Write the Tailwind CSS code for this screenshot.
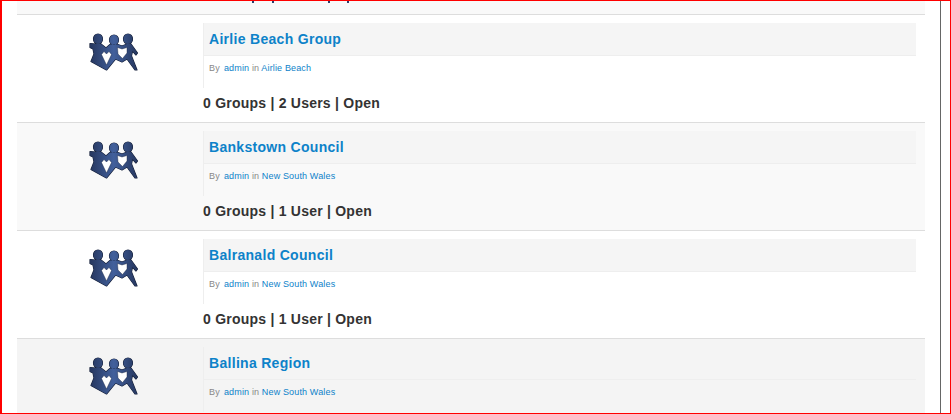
<!DOCTYPE html>
<html lang="en">
<head>
  <meta charset="UTF-8" />
  <title>Groups</title>
  <script src="https://cdn.jsdelivr.net/npm/@tailwindcss/browser@4"></script>
</head>
<body class="bg-white font-['Liberation_Sans',Arial,sans-serif]">
  <!-- sprite for the paper-doll group icon -->
  <svg class="absolute w-0 h-0">
    <defs>
      <linearGradient id="doll" x1="0" y1="0" x2="1" y2="0">
        <stop offset="0" stop-color="#26375f" />
        <stop offset="0.5" stop-color="#42609c" />
        <stop offset="1" stop-color="#26375f" />
      </linearGradient>
      <path id="doll-shape" d="M1 10.500 L6 11 L12 11 L17 15 L21 11.500 L29 11.500 L33 13 L38 11 L42 11 L48.500 20 L47 22 L43.500 18 L42.500 23 L48 37 L46 37 L38 26 L33 29 L26.500 26 L17.500 37 L2 28.500 L5 21 L4 16 L1 14.500 Z M4.500 6 a4.500 5 0 1 0 9 0 a4.500 5 0 1 0 -9 0 Z M20.500 7 a4.500 5 0 1 0 9 0 a4.500 5 0 1 0 -9 0 Z M34.500 6 a4.500 5 0 1 0 9 0 a4.500 5 0 1 0 -9 0 Z" />
      <symbol id="group-icon" viewBox="0 0 50 40">
        <use href="#doll-shape" fill="#16213b" stroke="#16213b" stroke-width="1.200" stroke-linejoin="round" />
        <use href="#doll-shape" fill="url(#doll)" />
        <path fill="#fff" stroke="#16213b" stroke-width="0.400" d="M28.500 14.500 L33 16 L38 14.500 L38 20 L33.500 25.500 L29 21 Z" />
        <path fill="#fff" stroke="#16213b" stroke-width="0.400" d="M12.500 21.500 L15 18.500 L17.500 21 L20 18.500 L22.500 21.500 L17.500 32 Z" />
      </symbol>
    </defs>
  </svg>

  <div class="flex h-[414px] overflow-hidden border border-[#f00] border-l-2 pl-[15px]">
    <div class="w-[908px] shrink-0">
      <!-- bottom of the row scrolled out above -->
      <div class="flex h-[13px] bg-[#f9f9f9] pl-[235px]">
        <span class="w-[2px] h-[2px] bg-[#2c3e6b]"></span>
        <span class="w-[2px] h-[2px] ml-[18px] bg-[#2c3e6b]"></span>
        <span class="w-[2px] h-[2px] ml-[54px] bg-[#2c3e6b]"></span>
        <span class="w-[2px] h-[2px] ml-[17px] bg-[#2c3e6b]"></span>
      </div>

      <!-- Airlie Beach Group -->
      <div class="flex h-[108px] border-t border-[#dddddd] bg-white">
        <div class="w-[186px] shrink-0 pl-[72px] pt-[18px]">
          <svg class="w-[50px] h-[40px]"><use href="#group-icon" /></svg>
        </div>
        <div class="flex-1 pr-[9px]">
          <div class="h-[65px] border-l border-[#eeeeee] mt-[8px]">
            <div class="h-[33px] bg-[#f5f5f5] border-b border-[#eeeeee] pl-[5px] flex items-center text-[14px] leading-none font-bold text-[#0d82c9] tracking-[0.3px]">Airlie Beach Group</div>
            <p class="pl-[5px] pt-[6px] text-[9px] leading-[12px] tracking-[0.15px] text-[#888888]">By <a class="ml-[1.5px] text-[#0d82c9]">admin</a> in <a class="text-[#0d82c9]">Airlie Beach</a></p>
          </div>
          <p class="mt-[7px] text-[14px] leading-[16px] font-bold text-[#333333] tracking-[0.23px]">0 Groups | 2 Users | Open</p>
        </div>
      </div>

      <!-- Bankstown Council -->
      <div class="flex h-[108px] border-t border-[#dddddd] bg-[#f9f9f9]">
        <div class="w-[186px] shrink-0 pl-[72px] pt-[18px]">
          <svg class="w-[50px] h-[40px]"><use href="#group-icon" /></svg>
        </div>
        <div class="flex-1 pr-[9px]">
          <div class="h-[65px] border-l border-[#eeeeee] mt-[8px]">
            <div class="h-[33px] bg-[#f5f5f5] border-b border-[#eeeeee] pl-[5px] flex items-center text-[14px] leading-none font-bold text-[#0d82c9] tracking-[0.3px]">Bankstown Council</div>
            <p class="pl-[5px] pt-[6px] text-[9px] leading-[12px] tracking-[0.15px] text-[#888888]">By <a class="ml-[1.5px] text-[#0d82c9]">admin</a> in <a class="text-[#0d82c9]">New South Wales</a></p>
          </div>
          <p class="mt-[7px] text-[14px] leading-[16px] font-bold text-[#333333] tracking-[0.23px]">0 Groups | 1 User | Open</p>
        </div>
      </div>

      <!-- Balranald Council -->
      <div class="flex h-[108px] border-t border-[#dddddd] bg-white">
        <div class="w-[186px] shrink-0 pl-[72px] pt-[18px]">
          <svg class="w-[50px] h-[40px]"><use href="#group-icon" /></svg>
        </div>
        <div class="flex-1 pr-[9px]">
          <div class="h-[65px] border-l border-[#eeeeee] mt-[8px]">
            <div class="h-[33px] bg-[#f5f5f5] border-b border-[#eeeeee] pl-[5px] flex items-center text-[14px] leading-none font-bold text-[#0d82c9] tracking-[0.3px]">Balranald Council</div>
            <p class="pl-[5px] pt-[6px] text-[9px] leading-[12px] tracking-[0.15px] text-[#888888]">By <a class="ml-[1.5px] text-[#0d82c9]">admin</a> in <a class="text-[#0d82c9]">New South Wales</a></p>
          </div>
          <p class="mt-[7px] text-[14px] leading-[16px] font-bold text-[#333333] tracking-[0.23px]">0 Groups | 1 User | Open</p>
        </div>
      </div>

      <!-- Ballina Region -->
      <div class="flex h-[108px] border-t border-[#dddddd] bg-[#f4f4f4]">
        <div class="w-[186px] shrink-0 pl-[72px] pt-[18px]">
          <svg class="w-[50px] h-[40px]"><use href="#group-icon" /></svg>
        </div>
        <div class="flex-1 pr-[9px]">
          <div class="h-[65px] border-l border-[#eeeeee] mt-[8px]">
            <div class="h-[33px] bg-[#f4f4f4] border-b border-[#eeeeee] pl-[5px] flex items-center text-[14px] leading-none font-bold text-[#0d82c9] tracking-[0.3px]">Ballina Region</div>
            <p class="pl-[5px] pt-[6px] text-[9px] leading-[12px] tracking-[0.15px] text-[#888888]">By <a class="ml-[1.5px] text-[#0d82c9]">admin</a> in <a class="text-[#0d82c9]">New South Wales</a></p>
          </div>
        </div>
      </div>
    </div>
    <!-- window edge -->
    <div class="w-px shrink-0 ml-[15px] bg-[#666666]"></div>
  </div>
</body>
</html>
